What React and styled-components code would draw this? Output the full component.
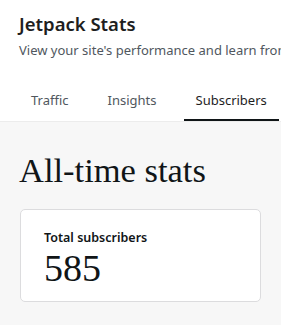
import styled, { createGlobalStyle } from 'styled-components';

const GlobalStyle = createGlobalStyle`
  html, body {
    margin: 0;
    padding: 0;
    height: 100%;
    background: #f7f7f7;
  }
  body {
    font-family: "Noto Sans", "Open Sans", sans-serif;
    color: #1e1e1e;
    overflow: hidden;
  }
`;

const Page = styled.div`
  width: 281px;
  min-height: 325px;
  background: #f7f7f7;
`;

const Header = styled.header`
  background: #fff;
  border-bottom: 1px solid #ececec;
  padding: 10px 0 0 19px;
  white-space: nowrap;
  overflow: hidden;
`;

const Title = styled.h1`
  margin: 0;
  font-size: 18.5px;
  font-weight: 600;
  line-height: 28px;
  color: #1e1e1e;
`;

const Subtitle = styled.p`
  margin: 2px 0 0;
  font-size: 13px;
  line-height: 20px;
  color: #50575e;
`;

const Tabs = styled.nav`
  display: flex;
  gap: 15px;
  margin-top: 22px;
`;

const Tab = styled.div`
  padding: 8px 12px 9px;
  font-size: 13px;
  line-height: 20px;
  color: ${(p) => (p.$active ? '#1e1e1e' : '#50575e')};
  border-bottom: 2px solid ${(p) => (p.$active ? '#101517' : 'transparent')};
`;

const Main = styled.main`
  padding: 28px 20px 0 19px;
`;

const SectionTitle = styled.h2`
  margin: 0;
  font-family: "Liberation Serif", "DejaVu Serif", serif;
  font-size: 34.5px;
  font-weight: 400;
  line-height: 40px;
  color: #101517;
`;

const Card = styled.div`
  margin-top: 19px;
  margin-left: 1px;
  width: 241px;
  height: 93px;
  box-sizing: border-box;
  background: #fff;
  border: 1px solid #dcdcde;
  border-radius: 5px;
  padding: 19px 23px;
`;

const CardLabel = styled.div`
  font-size: 12.5px;
  font-weight: 600;
  line-height: 18px;
  color: #101517;
`;

const CardValue = styled.div`
  font-family: "Liberation Serif", "DejaVu Serif", serif;
  font-size: 38px;
  line-height: 42px;
  color: #101517;
`;

export default function App() {
  return (
    <Page>
      <GlobalStyle />
      <Header>
        <Title>Jetpack Stats</Title>
        <Subtitle>View your site's performance and learn from</Subtitle>
        <Tabs>
          <Tab>Traffic</Tab>
          <Tab>Insights</Tab>
          <Tab $active>Subscribers</Tab>
        </Tabs>
      </Header>
      <Main>
        <SectionTitle>All-time stats</SectionTitle>
        <Card>
          <CardLabel>Total subscribers</CardLabel>
          <CardValue>585</CardValue>
        </Card>
      </Main>
    </Page>
  );
}
